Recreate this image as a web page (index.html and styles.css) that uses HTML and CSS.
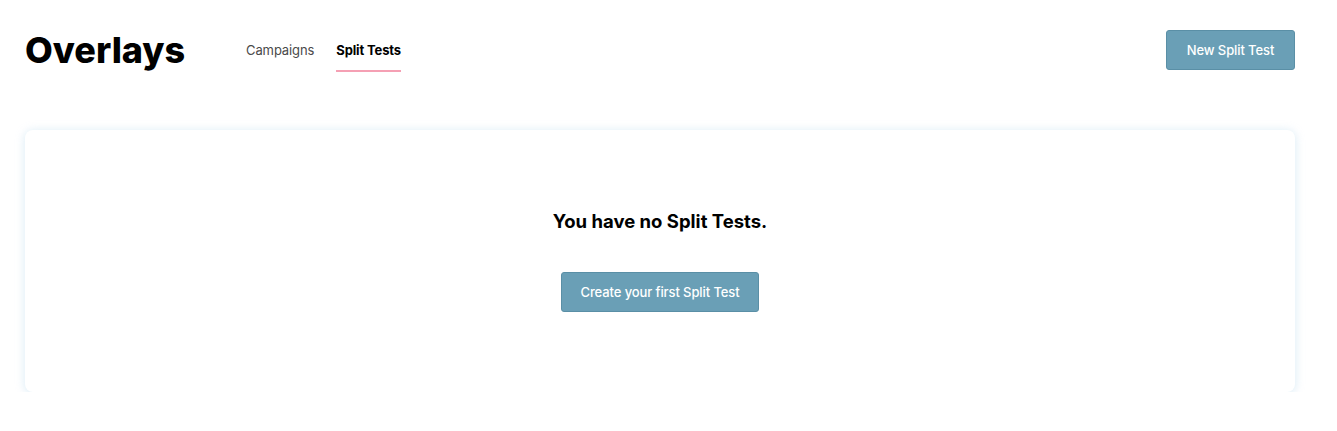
FILE: index.html
```html
<!DOCTYPE html>
<html lang="en">
<head>
<meta charset="utf-8">
<title>Overlays</title>
<link rel="stylesheet" href="styles.css">
</head>
<body>
<div class="page">
  <header class="header">
    <h1 class="title">Overlays</h1>
    <nav class="tabs">
      <a class="tab">Campaigns</a>
      <a class="tab tab-active">Split Tests</a>
    </nav>
    <button class="btn btn-header">New Split Test</button>
  </header>
  <section class="card">
    <h2 class="empty-title">You have no Split Tests.</h2>
    <button class="btn">Create your first Split Test</button>
  </section>
</div>
</body>
</html>
```

FILE: styles.css
```css
* { box-sizing: border-box; }
html, body { margin: 0; padding: 0; background: #fff; }
body {
  font-family: Inter, "Liberation Sans", sans-serif;
  color: #111;
}
.page {
  padding: 30px 42px 0 25px;
}
.header {
  display: flex;
  align-items: center;
  height: 40px;
}
.title {
  margin: 0;
  font-size: 36px;
  font-weight: 800;
  letter-spacing: 0;
  color: #000;
  line-height: 40px;
  width: 221px;
}
.tabs {
  display: flex;
  gap: 22px;
  flex: 1;
  align-self: stretch;
}
.tab {
  position: relative;
  font-size: 13px;
  line-height: 40px;
  color: #4a4a4a;
  letter-spacing: -0.1px;
}
.tab-active {
  font-weight: 700;
  color: #000;
  letter-spacing: -0.15px;
}
.tab-active::after {
  content: "";
  position: absolute;
  left: 0;
  right: 0;
  bottom: -2px;
  height: 2px;
  background: #f5a0b4;
}
.btn {
  font-family: inherit;
  font-size: 13px;
  font-weight: 500;
  letter-spacing: -0.1px;
  color: #fff;
  background: #6a9fb6;
  border: 1px solid #5a8fa6;
  border-radius: 3px;
  height: 40px;
  padding: 0 20px;
  cursor: pointer;
}
.btn-header {
  width: 129px;
  padding: 0;
}
.card {
  margin-top: 60px;
  background: #fff;
  border-radius: 8px;
  box-shadow: 0 1px 8px 1px rgba(175, 212, 236, 0.4);
  padding: 80px 0;
  display: flex;
  flex-direction: column;
  align-items: center;
}
.empty-title {
  margin: 0 0 40px;
  font-size: 18.5px;
  line-height: 22px;
  font-weight: 700;
  color: #000;
}
.card .btn {
  width: 198px;
  padding: 0;
}
```
